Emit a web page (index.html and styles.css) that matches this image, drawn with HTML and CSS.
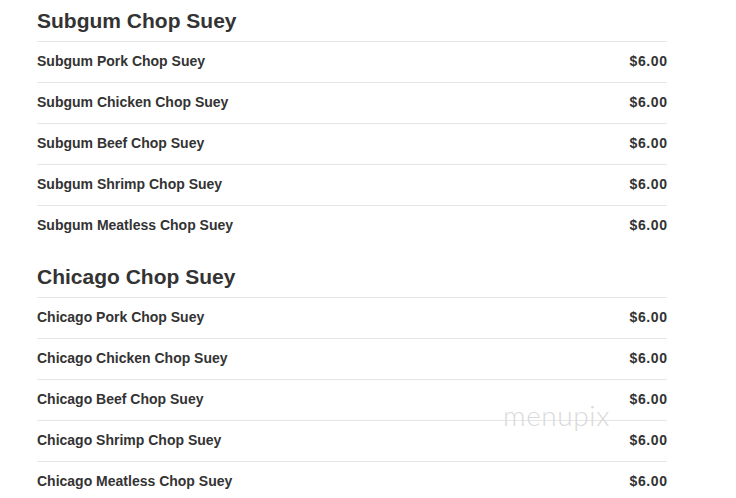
FILE: index.html
```html
<!DOCTYPE html>
<html>
<head>
<meta charset="utf-8">
<link rel="stylesheet" href="styles.css">
</head>
<body>
<div class="menu">
  <section class="section">
    <h2 class="title">Subgum Chop Suey</h2>
    <div class="row"><span class="name">Subgum Pork Chop Suey</span><span class="price">$6.00</span></div>
    <div class="row"><span class="name">Subgum Chicken Chop Suey</span><span class="price">$6.00</span></div>
    <div class="row"><span class="name">Subgum Beef Chop Suey</span><span class="price">$6.00</span></div>
    <div class="row"><span class="name">Subgum Shrimp Chop Suey</span><span class="price">$6.00</span></div>
    <div class="row"><span class="name">Subgum Meatless Chop Suey</span><span class="price">$6.00</span></div>
  </section>
  <section class="section">
    <h2 class="title">Chicago Chop Suey</h2>
    <div class="row"><span class="name">Chicago Pork Chop Suey</span><span class="price">$6.00</span></div>
    <div class="row"><span class="name">Chicago Chicken Chop Suey</span><span class="price">$6.00</span></div>
    <div class="row"><span class="name">Chicago Beef Chop Suey</span><span class="price">$6.00</span></div>
    <div class="row"><span class="name">Chicago Shrimp Chop Suey</span><span class="price">$6.00</span></div>
    <div class="row"><span class="name">Chicago Meatless Chop Suey</span><span class="price">$6.00</span></div>
  </section>
  <div class="watermark">menupix</div>
</div>
</body>
</html>
```
FILE: styles.css
```css
html, body {
  margin: 0;
  padding: 0;
  background: #fff;
}
body {
  font-family: "Liberation Sans", Arial, sans-serif;
  color: #333;
}
.menu {
  position: relative;
  width: 630px;
  margin-left: 37px;
}
.section {
  margin-bottom: 10px;
}
.title {
  margin: 0;
  height: 41px;
  display: flex;
  align-items: center;
  font-size: 21px;
  font-weight: bold;
  color: #333;
  padding-top: 1px;
  box-sizing: border-box;
}
.row {
  height: 40px;
  border-top: 1px solid #e6e6e6;
  display: flex;
  align-items: center;
  justify-content: space-between;
  font-size: 14px;
  font-weight: bold;
  color: #333;
}
.name, .price {
  margin-bottom: 3px;
}
.price {
  letter-spacing: 0.6px;
  margin-right: -0.6px;
}
.watermark {
  position: absolute;
  left: 466px;
  top: 398px;
  font-family: "Lato", sans-serif;
  font-weight: 300;
  font-size: 28px;
  color: #dadada;
  letter-spacing: 0.6px;
}
```
